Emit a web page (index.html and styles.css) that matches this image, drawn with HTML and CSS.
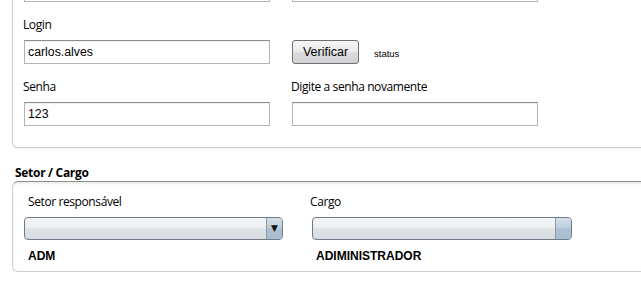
FILE: index.html
```html
<!DOCTYPE html>
<html lang="pt">
<head>
    <meta charset="UTF-8">
    <title>Cadastro de usuário</title>
    <link rel="stylesheet" href="styles.css">
</head>
<body>

<div class="panel panel-user">
    <div class="form-grid">
        <input class="field" type="text" value="">
        <input class="field" type="text" value="">

        <div class="item">
            <label class="label">Login</label>
            <input class="field" type="text" value="carlos.alves">
        </div>
        <div class="item">
            <span class="label"></span>
            <div class="verify">
                <button class="btn">Verificar</button>
                <span class="status">status</span>
            </div>
        </div>

        <div class="item">
            <label class="label">Senha</label>
            <input class="field" type="text" value="123">
        </div>
        <div class="item">
            <label class="label">Digite a senha novamente</label>
            <input class="field" type="text" value="">
        </div>
    </div>
</div>

<h2 class="group-title">Setor / Cargo</h2>
<div class="panel panel-sector">
    <div class="sector-grid">
        <div class="item">
            <label class="label label-setor">Setor responsável</label>
            <div class="combo">
                <span class="combo-value"></span>
                <span class="combo-arrow">&#9660;</span>
            </div>
            <div class="picked">ADM</div>
        </div>
        <div class="item">
            <label class="label label-cargo">Cargo</label>
            <div class="combo">
                <span class="combo-value"></span>
                <span class="combo-arrow"></span>
            </div>
            <div class="picked">ADIMINISTRADOR</div>
        </div>
    </div>
</div>

</body>
</html>
```

FILE: styles.css
```css
body {
    margin: 0;
    background: #fff;
    font-family: "Open Sans", "Noto Sans", sans-serif;
    color: #000;
}

.panel {
    margin-left: 12px;
    margin-right: -10px;
    border: 1px solid #cfcfcf;
    background: #fff;
}

.panel-user {
    margin-top: -32px;
    padding: 10px 0 21px 11px;
    border-top: none;
    border-bottom-left-radius: 6px;
    box-shadow: 0 1px 2px rgba(0, 0, 0, 0.08);
}

.form-grid {
    display: grid;
    grid-template-columns: 246px 246px;
    column-gap: 22px;
}

.item {
    display: flex;
    flex-direction: column;
}

.label {
    display: block;
    height: 16px;
    margin: 15px 0 7px -1px;
    font-size: 12px;
    line-height: 16px;
    letter-spacing: -0.4px;
}

.field {
    box-sizing: border-box;
    height: 24px;
    width: 246px;
    margin: 0;
    padding: 0 3px;
    border: 1px solid #b4b4b4;
    border-top-color: #8c8c8c;
    box-shadow: inset 0 1px 1px rgba(0, 0, 0, 0.06);
    font-family: "Liberation Sans", Arial, sans-serif;
    font-size: 12.3px;
    color: #000;
    outline: none;
}

.verify {
    display: flex;
    align-items: center;
    gap: 15px;
}

.btn {
    box-sizing: border-box;
    width: 67px;
    height: 24px;
    margin: 0;
    padding: 0;
    border: 1px solid #707070;
    border-radius: 3px;
    background: linear-gradient(#f6f6f6 0%, #ebebeb 48%, #dddddd 52%, #cfd1d4 100%);
    font-family: "Liberation Sans", Arial, sans-serif;
    font-size: 12.5px;
    color: #000;
}

.status {
    font-family: "Liberation Sans", Arial, sans-serif;
    font-size: 9.5px;
    padding-top: 2px;
}

.group-title {
    margin: 17px 0 0 0;
    padding-left: 15px;
    height: 16px;
    font-size: 12px;
    line-height: 16px;
    font-weight: bold;
    letter-spacing: -0.3px;
}

.panel-sector {
    padding: 12px 0 7px 11px;
    border-top-color: #8e8e8e;
    border-radius: 6px 0 0 6px;
    box-shadow: inset 0 2px 2px rgba(0, 0, 0, 0.07);
}

.sector-grid {
    display: grid;
    grid-template-columns: 259px 260px;
    column-gap: 29px;
}

.sector-grid .label {
    margin: 0 0 7px 0;
}

.sector-grid .label-setor {
    margin-left: 4px;
}

.sector-grid .label-cargo {
    margin-left: -2px;
}

.combo {
    box-sizing: border-box;
    display: flex;
    height: 23px;
    border: 1px solid #6f7b88;
    border-radius: 4px;
    overflow: hidden;
    background: linear-gradient(#f5f6f7 0%, #eceef0 45%, #dfe2e5 55%, #d8dbdf 100%);
}

.combo-value {
    flex: 1;
}

.combo-arrow {
    width: 15px;
    border-left: 1px solid #8a9bae;
    background: linear-gradient(#d3dde8 0%, #c0cfde 45%, #adc0d3 55%, #a9bcd0 100%);
    font-family: "DejaVu Sans", sans-serif;
    font-size: 9px;
    line-height: 20px;
    text-align: center;
    color: #111;
}

.picked {
    margin-top: 8px;
    padding-left: 4px;
    height: 16px;
    font-family: "Liberation Sans", Arial, sans-serif;
    font-size: 12px;
    line-height: 16px;
    font-weight: bold;
}
```
